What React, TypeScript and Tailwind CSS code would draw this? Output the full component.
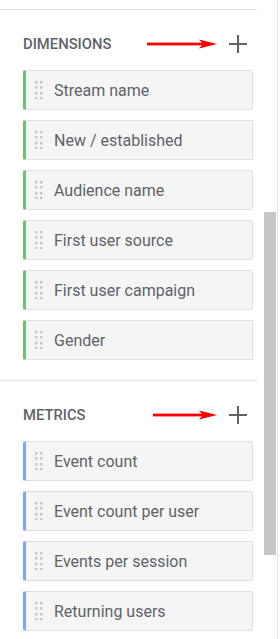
import React from "react";

const Handle = () => (
  <svg width="8" height="18" viewBox="0 0 8 18" className="shrink-0">
    {[0, 5, 11, 16].map((y) => (
      <g key={y} fill="#c6c6c6">
        <rect x="0" y={y} width="2.5" height="2.5" />
        <rect x="5" y={y} width="2.5" height="2.5" />
      </g>
    ))}
  </svg>
);

const Arrow = ({ w }: { w: number }) => (
  <svg width={w} height="12" viewBox={`0 0 ${w} 12`} className="shrink-0">
    <rect x="0" y="4.6" width={w - 12} height="2.8" fill="#ff0000" />
    <path d={`M${w - 18} 1.5 L${w} 6 L${w - 18} 10.5 L${w - 14} 6 Z`} fill="#ff0000" />
  </svg>
);

const Plus = () => (
  <svg width="24" height="24" viewBox="0 0 24 24" className="shrink-0">
    <path d="M12 3 V21 M3 12 H21" stroke="#5f6368" strokeWidth="2" fill="none" />
  </svg>
);

const Item = ({ label, color }: { label: string; color: string }) => (
  <div
    className={`flex h-[40px] w-[230px] items-center rounded-[2px] border border-[#e0e0e0] border-l-[3px] bg-[#f5f5f5] pl-[9px] ${color}`}
  >
    <Handle />
    <span className="ml-[11px] pt-[1px] text-[16px] leading-none text-[#5f6368]">{label}</span>
  </div>
);

const Section = ({
  title,
  items,
  color,
  divider,
  arrowW,
}: {
  title: string;
  items: string[];
  color: string;
  divider?: boolean;
  arrowW: number;
}) => (
  <div className={`pl-[23px] pr-[4px] pt-[16px] ${divider ? "border-b border-[#e0e0e0] pb-[20px]" : "pb-[10px]"}`}>
    <div className="flex h-[36px] items-center">
      <span className="text-[14.8px] font-medium text-[#5f6368]">{title}</span>
      <div className="ml-auto flex items-center">
        <Arrow w={arrowW} />
        <div className="ml-[9px] mr-[3px]">
          <Plus />
        </div>
      </div>
    </div>
    <div className="mt-[8px] flex flex-col gap-[10px]">
      {items.map((i) => (
        <Item key={i} label={i} color={color} />
      ))}
    </div>
  </div>
);

export default function App() {
  return (
    <div
      className="flex h-[639px] w-[280px] overflow-hidden bg-white"
      style={{ fontFamily: "Roboto, 'Liberation Sans', sans-serif" }}
    >
      <div className="mt-[9px] w-[257px] shrink-0 border-t border-[#e0e0e0]">
        <Section
          title="DIMENSIONS"
          color="border-l-[#6cbf6c]"
          divider
          arrowW={70}
          items={[
            "Stream name",
            "New / established",
            "Audience name",
            "First user source",
            "First user campaign",
            "Gender",
          ]}
        />
        <Section
          title="METRICS"
          color="border-l-[#7ba7f3]"
          arrowW={64}
          items={["Event count", "Event count per user", "Events per session", "Returning users"]}
        />
      </div>
      <div className="ml-[7px] w-[12px] shrink-0">
        <div className="mt-[212px] h-[343px] w-[12px] bg-[#c6c6c6]" />
      </div>
      <div className="ml-[1px] w-[1px] shrink-0 bg-[#e3e3e3]" />
    </div>
  );
}
